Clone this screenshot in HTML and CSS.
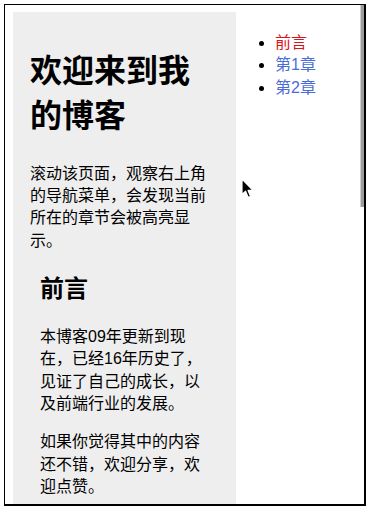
FILE: index.html
```html
<!DOCTYPE html>
<html lang="zh-CN">
<head>
<meta charset="utf-8">
<title>欢迎来到我的博客</title>
<link rel="stylesheet" href="styles.css">
</head>
<body>
<div class="frame">
  <div class="viewport">
    <main class="panel">
      <h1 class="title">欢迎来到我的博客</h1>
      <p>滚动该页面，观察右上角的导航菜单，会发现当前所在的章节会被高亮显示。</p>
      <section class="chapter">
        <h2 class="chapter-title">前言</h2>
        <p>本博客09年更新到现在，已经16年历史了，见证了自己的成长，以及前端行业的发展。</p>
        <p>如果你觉得其中的内容还不错，欢迎分享，欢迎点赞。</p>
      </section>
    </main>
    <ul class="nav">
      <li><a class="nav-link active" href="#intro">前言</a></li>
      <li><a class="nav-link" href="#c1">第1章</a></li>
      <li><a class="nav-link" href="#c2">第2章</a></li>
    </ul>
  </div>
  <div class="scrollbar"></div>
  <svg class="cursor" width="14" height="22" viewBox="0 0 14 22" aria-hidden="true">
    <path d="M1 1 L1 16.5 L4.6 13.2 L7.2 19.4 L9.6 18.4 L7.1 12.4 L12 12.4 Z" fill="#000" stroke="#fff" stroke-width="1.2" stroke-linejoin="round"/>
  </svg>
</div>
</body>
</html>
```

FILE: styles.css
```css
html, body {
  margin: 0;
  padding: 0;
  background: #fff;
}

body {
  font-family: "Liberation Sans", "Noto Sans CJK SC", sans-serif;
  color: #000;
  width: 370px;
  height: 510px;
  overflow: hidden;
}

.frame {
  position: relative;
  margin: 4px 0 0 4px;
  width: 359px;
  height: 499px;
  border-top: 1px solid #000;
  border-left: 1px solid #000;
  border-right: 2px solid #000;
  border-bottom: 2px solid #000;
  overflow: hidden;
  background: #fff;
}

.viewport {
  display: flex;
  align-items: flex-start;
  padding: 7px 0 0 8px;
  height: 100%;
  box-sizing: border-box;
}

.panel {
  flex: none;
  width: 223px;
  min-height: 520px;
  box-sizing: border-box;
  padding: 16px 22px 0 17px;
  background: #eeeeee;
}

.panel p {
  font-size: 16px;
  line-height: 1.4;
  margin: 16px 0;
}

.title {
  font-size: 32px;
  line-height: 1.4;
  font-weight: bold;
  margin: 21px 0 24px;
}

.chapter {
  padding: 0 10px;
}

.chapter-title {
  font-size: 24px;
  line-height: 1.4;
  font-weight: bold;
  margin: 20px 0;
}

.nav {
  margin: 20px 0 0 0;
  padding-left: 39px;
  font-size: 16px;
  line-height: 1.4;
  list-style: disc;
}

.nav-link {
  text-decoration: none;
  color: #4a6cd6;
}

.nav-link.active {
  color: #d8141c;
}

.scrollbar {
  position: absolute;
  right: 0;
  top: 0;
  width: 3px;
  height: 202px;
  background: #9c9c9c;
  border-left: 1px solid #cfcfcf;
}

.cursor {
  position: absolute;
  left: 236px;
  top: 173px;
}
```
